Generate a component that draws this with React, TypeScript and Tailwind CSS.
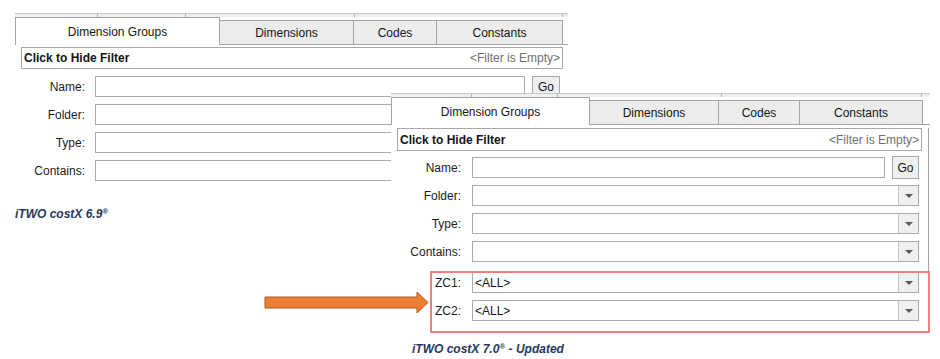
import React from 'react';

// Shared font stack for the WinForms-like screenshots
const UI_FONT = "font-['Liberation_Sans',Arial,sans-serif]";

function DropArrow() {
  return (
    <div className="flex h-full w-[20px] items-center justify-center border-l border-[#c6c6c6] bg-[#efefef]">
      <div className="h-0 w-0 border-l-[4px] border-r-[4px] border-t-[4px] border-l-transparent border-r-transparent border-t-[#5a5a5a]" />
    </div>
  );
}

function Combo({ className, value }: { className: string; value?: string }) {
  return (
    <div className={`flex h-[21px] items-center border border-[#ababab] bg-white ${className}`}>
      <div className="flex-1 pl-[2px] text-[12px] text-[#141414]">{value}</div>
      <DropArrow />
    </div>
  );
}

function Row({ label, labelClass, children }: { label: string; labelClass: string; children: React.ReactNode }) {
  return (
    <div className="flex h-[21px] items-center">
      <div className={`text-right text-[12px] text-[#1c1c1c] ${labelClass}`}>{label}</div>
      {children}
    </div>
  );
}

export default function App() {
  return (
    <div className={`relative h-[359px] w-[940px] overflow-hidden bg-white ${UI_FONT}`}>
      {/* costX 6.9 panel */}
      <div className="absolute left-0 top-0 w-[570px] pl-[15px] pt-[13px]">
        <div className="flex h-[4px] w-[553px] border-t border-[#c4c4c4] bg-[#f0f0f0]">
          <div className="w-[83px] border-r border-[#b4b4b4]" />
          <div className="w-[88px] border-r border-[#b4b4b4]" />
          <div className="w-[169px] border-r border-[#b4b4b4]" />
          <div className="w-[208px] border-r border-[#b4b4b4]" />
        </div>
        <div className="flex h-[28px] items-end text-[12px] text-[#141414]">
          <div className="flex h-[28px] w-[205px] items-center justify-center border-l border-r border-t border-[#a4a4a4] bg-white">
            Dimension Groups
          </div>
          <div className="flex h-[25px] w-[134px] items-center justify-center border-b border-r border-t border-[#a4a4a4] bg-[#ececec]">
            Dimensions
          </div>
          <div className="flex h-[25px] w-[83px] items-center justify-center border-b border-r border-t border-[#a4a4a4] bg-[#ececec]">
            Codes
          </div>
          <div className="flex h-[25px] w-[126px] items-center justify-center border-b border-r border-t border-[#a4a4a4] bg-[#ececec]">
            Constants
          </div>
          <div className="h-[1px] w-[5px] bg-[#a4a4a4]" />
        </div>

        <div className="ml-[6px] mt-[2px] flex h-[22px] w-[542px] items-center justify-between border border-[#a8a8a8] px-[2px]">
          <span className="text-[12px] font-bold text-[#141414]">Click to Hide Filter</span>
          <span className="text-[12px] text-[#6e6e6e]">&lt;Filter is Empty&gt;</span>
        </div>

        <div className="mt-[7px] flex flex-col gap-[7px]">
          <Row label="Name:" labelClass="w-[70px]">
            <div className="ml-[10px] h-[21px] w-[430px] border border-[#ababab] bg-white" />
            <div className="ml-[7px] flex h-[22px] w-[28px] items-center justify-center border border-[#a8a8a8] bg-[#efefef] text-[12px] text-[#141414]">
              Go
            </div>
          </Row>
          <Row label="Folder:" labelClass="w-[70px]">
            <Combo className="ml-[10px] w-[465px]" />
          </Row>
          <Row label="Type:" labelClass="w-[70px]">
            <Combo className="ml-[10px] w-[465px]" />
          </Row>
          <Row label="Contains:" labelClass="w-[70px]">
            <Combo className="ml-[10px] w-[465px]" />
          </Row>
        </div>

        <div className="mt-[26px] text-[12px] font-bold italic leading-[14px] text-[#1f3a60]">
          iTWO costX 6.9<sup className="text-[8px]">®</sup>
        </div>
      </div>

      {/* costX 7.0 panel */}
      <div className="absolute left-[391px] top-[93px] w-[540px] bg-white">
        <div className="flex h-[4px] w-[539px] border-t border-[#c4c4c4] bg-[#f0f0f0]">
          <div className="w-[81px] border-r border-[#b4b4b4]" />
          <div className="w-[86px] border-r border-[#b4b4b4]" />
          <div className="w-[164px] border-r border-[#b4b4b4]" />
          <div className="w-[200px] border-r border-[#b4b4b4]" />
        </div>
        <div className="flex h-[28px] items-end text-[12px] text-[#141414]">
          <div className="flex h-[28px] w-[199px] items-center justify-center border-l border-r border-t border-[#a4a4a4] bg-white">
            Dimension Groups
          </div>
          <div className="flex h-[25px] w-[129px] items-center justify-center border-b border-r border-t border-[#a4a4a4] bg-[#ececec]">
            Dimensions
          </div>
          <div className="flex h-[25px] w-[81px] items-center justify-center border-b border-r border-t border-[#a4a4a4] bg-[#ececec]">
            Codes
          </div>
          <div className="flex h-[25px] w-[123px] items-center justify-center border-b border-r border-t border-[#a4a4a4] bg-[#ececec]">
            Constants
          </div>
          <div className="h-[1px] w-[7px] bg-[#a4a4a4]" />
        </div>

        <div className="w-[538px] border-r border-[#a4a4a4] pb-[6px]">
          <div className="ml-[6px] mt-[3px] flex h-[23px] w-[525px] items-center justify-between border border-[#a8a8a8] px-[2px]">
            <span className="text-[12px] font-bold text-[#141414]">Click to Hide Filter</span>
            <span className="text-[12px] text-[#6e6e6e]">&lt;Filter is Empty&gt;</span>
          </div>

          <div className="mt-[6px] flex flex-col gap-[7px]">
            <Row label="Name:" labelClass="w-[70px]">
              <div className="ml-[11px] h-[21px] w-[413px] border border-[#ababab] bg-white" />
              <div className="ml-[7px] flex h-[23px] w-[27px] items-center justify-center border border-[#a8a8a8] bg-[#efefef] text-[12px] text-[#141414]">
                Go
              </div>
            </Row>
            <Row label="Folder:" labelClass="w-[70px]">
              <Combo className="ml-[11px] w-[447px]" />
            </Row>
            <Row label="Type:" labelClass="w-[70px]">
              <Combo className="ml-[11px] w-[447px]" />
            </Row>
            <Row label="Contains:" labelClass="w-[70px]">
              <Combo className="ml-[11px] w-[447px]" />
            </Row>
            <div className="mt-[3px] flex flex-col gap-[7px]">
              <Row label="ZC1:" labelClass="w-[70px]">
                <Combo className="ml-[11px] w-[447px]" value="<ALL>" />
              </Row>
              <Row label="ZC2:" labelClass="w-[70px]">
                <Combo className="ml-[11px] w-[447px]" value="<ALL>" />
              </Row>
            </div>
          </div>
        </div>

        <div className="mt-[15px] pl-[21px] text-[12px] font-bold italic leading-[14px] text-[#1f3a60]">
          iTWO costX 7.0<sup className="text-[8px]">®</sup> - Updated
        </div>
      </div>

      {/* highlight around the new ZC filters */}
      <div className="absolute left-[430px] top-[271px] h-[62px] w-[500px] border-2 border-[#f27c7c]" />

      {/* orange arrow */}
      <svg className="absolute left-[264px] top-[290px]" width="166" height="26" viewBox="0 0 166 26">
        <path d="M1 7 H153 V2 L164 12.5 L153 23 V18 H1 Z" fill="#ed7d31" stroke="#ae5a21" strokeWidth="1" />
      </svg>
    </div>
  );
}
